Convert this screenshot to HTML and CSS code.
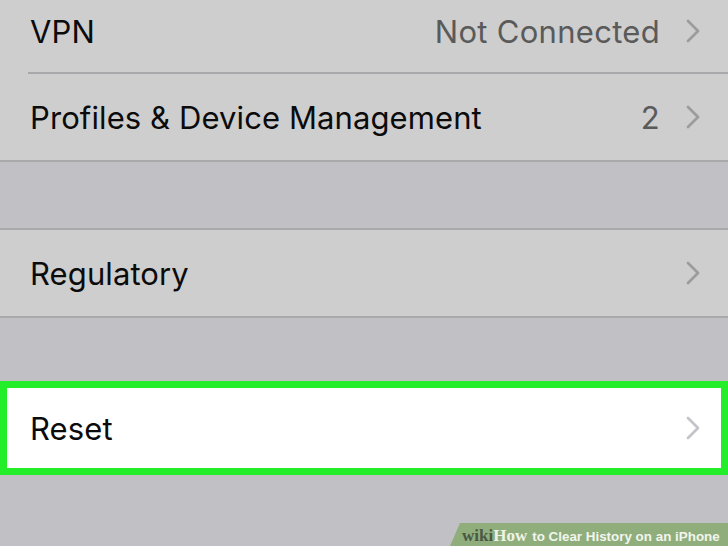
FILE: index.html
```html
<!DOCTYPE html>
<html>
<head>
<meta charset="utf-8">
<link rel="stylesheet" href="styles.css">
</head>
<body>
<div class="screen">
  <div class="group first">
    <div class="row inset">
      <span class="label">VPN</span>
      <span class="value">Not Connected</span>
      <svg class="chev" viewBox="0 0 14 24"><polyline points="2,2 12,12 2,22"/></svg>
    </div>
    <div class="row">
      <span class="label">Profiles &amp; Device Management</span>
      <span class="value">2</span>
      <svg class="chev" viewBox="0 0 14 24"><polyline points="2,2 12,12 2,22"/></svg>
    </div>
  </div>
  <div class="gap gap1"></div>
  <div class="group">
    <div class="row">
      <span class="label">Regulatory</span>
      <svg class="chev" viewBox="0 0 14 24"><polyline points="2,2 12,12 2,22"/></svg>
    </div>
  </div>
  <div class="gap gap2"></div>
  <div class="highlight">
    <div class="row white">
      <span class="label">Reset</span>
      <svg class="chev light" viewBox="0 0 14 24"><polyline points="2,2 12,12 2,22"/></svg>
    </div>
  </div>
  <div class="watermark"><span class="wiki">wiki</span><span class="how">How</span><span class="title">to Clear History on an iPhone</span></div>
</div>
</body>
</html>
```
FILE: styles.css
```css
html, body {
  margin: 0;
  padding: 0;
}
body {
  background: #c1c0c5;
  width: 728px;
  height: 546px;
  overflow: hidden;
  font-family: "Inter", "Liberation Sans", sans-serif;
}
.screen {
  position: relative;
  width: 728px;
  height: 546px;
  overflow: hidden;
}
.group {
  background: #cecece;
  border-top: 2px solid #a9a9ab;
  border-bottom: 2px solid #a9a9ab;
}
.group.first {
  margin-top: -14px;
}
.row {
  position: relative;
  display: flex;
  align-items: center;
  height: 86px;
  padding: 0 28px 0 30px;
}
.row.inset::after {
  content: "";
  position: absolute;
  left: 28px;
  right: 0;
  bottom: 0;
  height: 2px;
  background: #a9a9ab;
}
.label {
  flex: 1;
  font-size: 31px;
  color: #0b0b0b;
  letter-spacing: 0.1px;
}
.value {
  font-size: 31px;
  color: #5a5a5a;
  margin-right: 26px;
  letter-spacing: 0.3px;
}
.chev {
  width: 14px;
  height: 24px;
  fill: none;
  stroke: #9c9c9c;
  stroke-width: 2.8;
  stroke-linecap: round;
  stroke-linejoin: round;
}
.chev.light {
  stroke: #c4c4c8;
}
.gap1 {
  height: 66px;
}
.gap2 {
  height: 63px;
}
.highlight {
  border: 7px solid #24ee2a;
  background: #ffffff;
}
.row.white {
  height: 80px;
  padding-left: 23px;
  padding-right: 21px;
}
.watermark {
  position: absolute;
  left: 450px;
  bottom: 0;
  width: 278px;
  height: 23px;
  background: #8fae7c;
  clip-path: polygon(10px 0, 100% 0, 100% 100%, 0 100%);
  display: flex;
  align-items: baseline;
  padding: 4px 0 0 12px;
  box-sizing: border-box;
  white-space: nowrap;
}
.wiki, .how {
  font-family: "Liberation Serif", serif;
  font-weight: bold;
  font-size: 17px;
  line-height: 18px;
}
.wiki {
  color: #4a5844;
}
.how {
  color: #eef3e6;
}
.title {
  font-family: "Liberation Sans", sans-serif;
  font-weight: bold;
  font-size: 13.4px;
  line-height: 18px;
  color: #f2f5ee;
  margin-left: 5px;
}
```
